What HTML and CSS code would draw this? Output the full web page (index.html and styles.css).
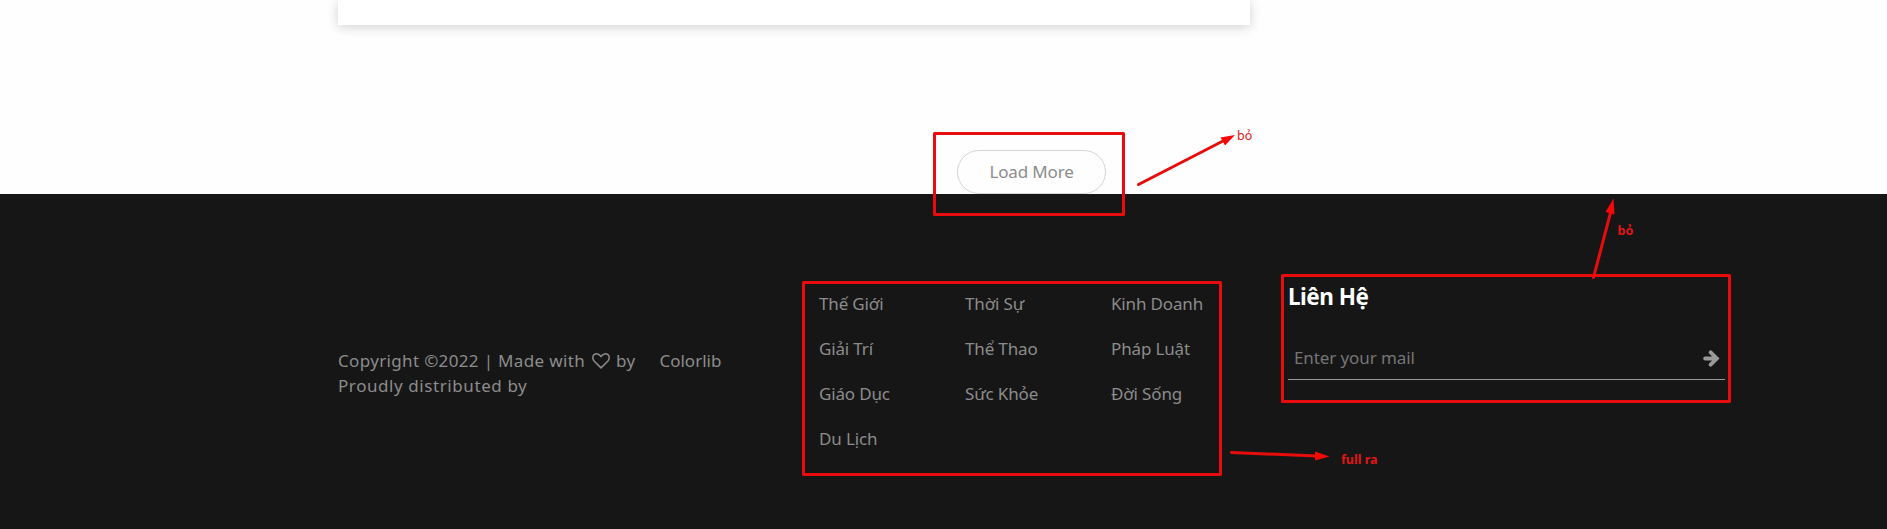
FILE: index.html
```
<!DOCTYPE html>
<html lang="vi">
<head>
<meta charset="utf-8">
<title>Footer</title>
<link rel="stylesheet" href="styles.css">
</head>
<body>
<main class="main">
  <div class="container">
    <div class="post-card"></div>
    <div class="load-more"><a class="load-more-btn">Load More</a></div>
  </div>
</main>
<footer class="footer">
  <div class="container footer-row">
    <div class="copyright">
      <p class="copy-line">Copyright ©2022 | Made with<svg class="heart" viewBox="0 0 18 16"><path d="M9 14.9 2.3 8.2C.2 6 .4 3.1 2.1 1.7c2-1.600 4.800-1.100 6.900 1.800 2.100-2.900 4.900-3.400 6.900-1.800 1.700 1.400 1.900 4.300-.2 6.500z"/></svg><span class="by">by</span><a class="brand">Colorlib</a></p>
      <p class="copy-line copy-second">Proudly distributed by</p>
    </div>
    <ul class="links">
      <li>Thế Giới</li><li>Thời Sự</li><li>Kinh Doanh</li>
      <li>Giải Trí</li><li>Thể Thao</li><li>Pháp Luật</li>
      <li>Giáo Dục</li><li>Sức Khỏe</li><li>Đời Sống</li>
      <li>Du Lịch</li>
    </ul>
    <div class="contact">
      <h3 class="contact-title">Liên Hệ</h3>
      <div class="mail">
        <span class="mail-text">Enter your mail</span>
        <svg class="go" viewBox="0 0 16 16"><path d="M2 8h11M7.200 2.200 13 8l-5.800 5.800"/></svg>
      </div>
    </div>
  </div>
</footer>
<svg class="notes" viewBox="0 0 1887 529">
  <g class="note-line">
    <rect x="934.5" y="133.500" width="189" height="81"/>
    <rect x="803.500" y="282.500" width="417" height="192"/>
    <rect x="1282.500" y="275.500" width="447" height="126"/>
    <path d="M1138.500 184.500 1224 140.500"/>
    <path d="M1593.500 277.500 1611 211"/>
    <path d="M1231.500 452.500 1317 456"/>
  </g>
  <g class="note-head">
    <path d="M1235 135 1220.500 137.500 1225 145.500z"/>
    <path d="M1613.500 198.500 1605.500 212 1614.500 214.500z"/>
    <path d="M1329.500 456.500 1315 451.500 1315 460.500z"/>
  </g>
  <g class="note-text">
    <text x="1237" y="140">bỏ</text>
    <text class="strong" x="1617.500" y="235">bỏ</text>
    <text class="strong" x="1341" y="464">full ra</text>
  </g>
</svg>
</body>
</html>
```
FILE: styles.css
```
* { box-sizing: border-box; }
body {
  margin: 0;
  height: 529px;
  overflow: hidden;
  background: #fefefe;
  font: 17px/25px "Noto Sans", "Open Sans", sans-serif;
  letter-spacing: -0.15px;
  color: #8c8c8c;
}
.container { width: 1387px; margin-left: 338px; }
.main { height: 194px; overflow: hidden; }
.post-card {
  width: 912px;
  height: 25px;
  background: #fff;
  box-shadow: 0 2px 12px 0 rgba(0, 0, 0, 0.18);
}
.load-more { display: flex; padding: 125px 0 0 619px; }
.load-more-btn {
  width: 149px;
  height: 44px;
  border: 1px solid #d5d5d5;
  border-radius: 22px;
  line-height: 41px;
  text-align: center;
}
.footer { height: 335px; padding-top: 84px; background: #161616; }
.footer-row { display: grid; grid-template-columns: 481px 469px 437px; }
.copyright { padding-top: 70px; }
.copy-line {
  display: flex;
  align-items: center;
  margin: 0;
  height: 25px;
  white-space: nowrap;
  letter-spacing: 0.34px;
}
.copy-second { letter-spacing: 0.58px; }
.heart {
  width: 18px;
  height: 16px;
  margin: 0 6px 0 7px;
  fill: none;
  stroke: #8c8c8c;
  stroke-width: 1.5;
}
.brand { margin-left: 24px; letter-spacing: 0; }
.links {
  display: grid;
  grid-template-columns: 146px 146px 146px;
  grid-auto-rows: 45px;
  margin: 0;
  padding: 13px 0 0;
  list-style: none;
}
.contact-title {
  margin: 0;
  padding-top: 4px;
  height: 55px;
  font-size: 22.5px;
  line-height: 30px;
  letter-spacing: -0.5px;
  color: #fff;
}
.mail {
  display: flex;
  align-items: center;
  justify-content: space-between;
  height: 47px;
  padding: 2px 5px 0 6px;
  border-bottom: 1px solid #999;
}
.mail-text { color: #757575; letter-spacing: -0.1px; }
.go {
  width: 17px;
  height: 17px;
  margin-top: 2px;
  fill: none;
  stroke: #999;
  stroke-width: 3.6;
  stroke-linecap: round;
}
.notes { position: absolute; left: 0; top: 0; width: 1887px; height: 529px; }
.note-line { fill: none; stroke: #e80c0c; stroke-width: 3; stroke-linejoin: round; stroke-linecap: round; }
.note-head { fill: #f50808; }
.note-text { fill: #e01616; font-size: 12.5px; letter-spacing: 0; }
.strong { font-weight: 700; }
```
